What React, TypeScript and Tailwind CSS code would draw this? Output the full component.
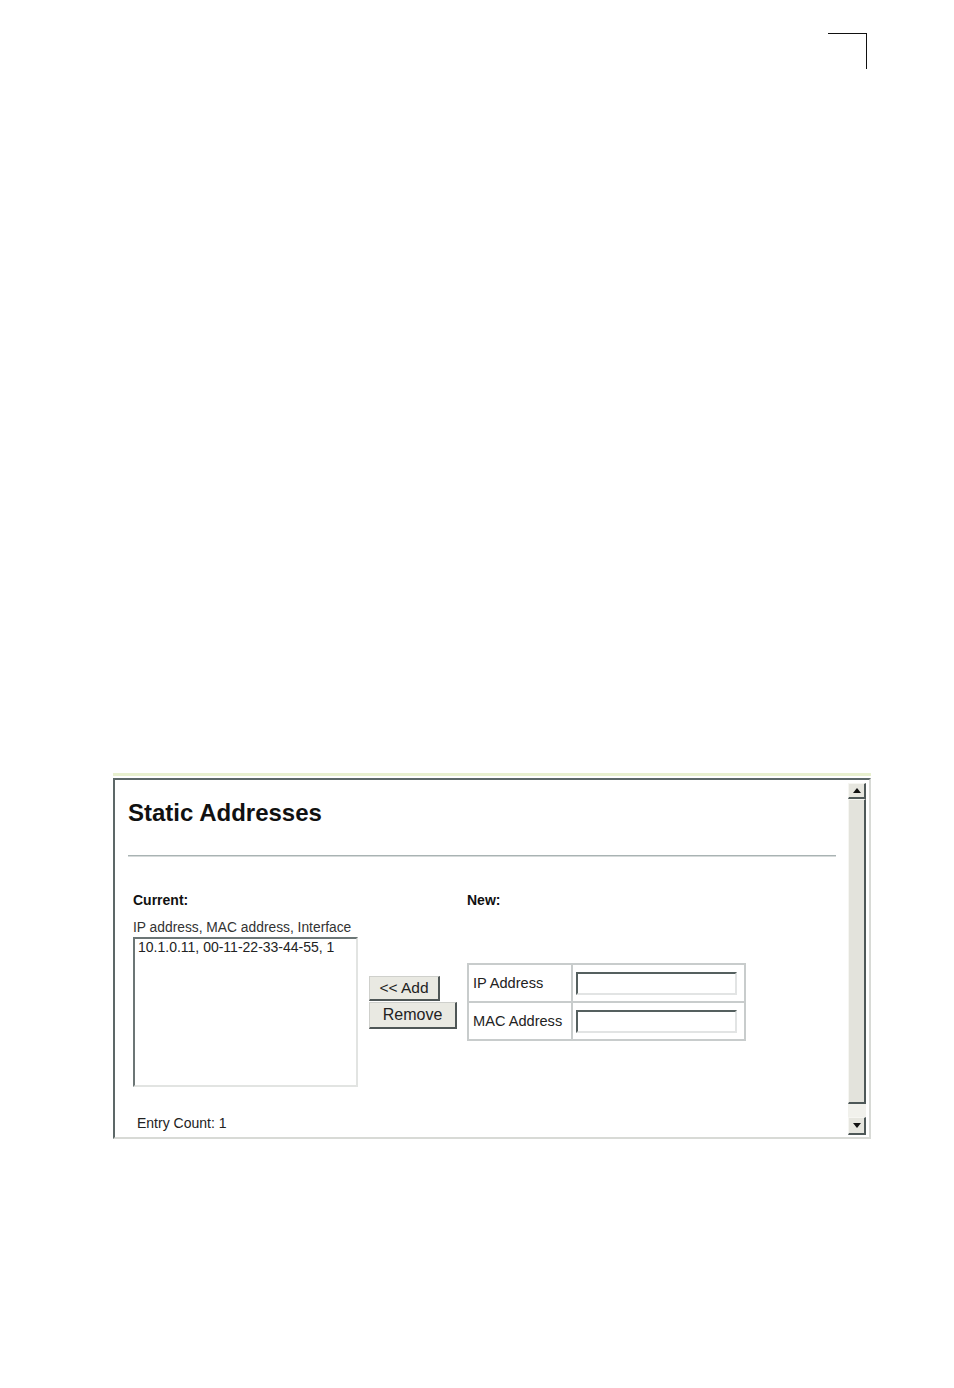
import React from 'react';

const Arrow = ({ down }: { down?: boolean }) => (
    <svg width="8" height="5" viewBox="0 0 8 5" className="block">
        <polygon points={down ? '0,0 8,0 4,5' : '0,5 8,5 4,0'} fill="#111" />
    </svg>
);

const App: React.FC = () => {
    return (
        <div className="w-[954px] h-[1388px] bg-white font-['Liberation_Sans',Arial,sans-serif] text-[#222]">
            {/* crop mark */}
            <div className="flex justify-end pt-[33px] pr-[87px]">
                <div className="w-[39px] h-[36px] border-t-[1.5px] border-r-[1.5px] border-[#111]" />
            </div>

            {/* browser frame */}
            <div className="ml-[113px] mt-[704px] w-[758px] border-t-[3px] border-[#e8f0cf] pt-[2px]">
                <div className="flex h-[361px] overflow-hidden border-2 border-t-[#5d6868] border-l-[#5d6868] border-r-[#d8dad6] border-b-[#d8dad6]">
                    <div className="flex-1 pl-[13px] pr-[12px] pt-[19px]">
                        <h1 className="text-[24px] leading-[27px] font-bold text-[#111]">Static Addresses</h1>
                        <div className="mt-[29px] border-t border-b border-t-[#a9b3b3] border-b-[#d6dada]" />

                        <div className="mt-[35px] ml-[5px] flex items-start">
                            {/* current list */}
                            <div className="w-[225px]">
                                <div className="text-[14px] leading-[16px] font-bold text-[#111]">Current:</div>
                                <div className="mt-[12px] text-[13.8px] leading-[16px] text-[#333] whitespace-nowrap">
                                    IP address, MAC address, Interface
                                </div>
                                <div className="mt-[1px] h-[150px] border-2 border-t-[#6c7676] border-l-[#6c7676] border-r-[#e2e4e2] border-b-[#e2e4e2] pl-[3px]">
                                    <div className="text-[14px] leading-[16px] whitespace-nowrap">10.1.0.11, 00-11-22-33-44-55, 1</div>
                                </div>
                                <div className="mt-[28px] ml-[4px] text-[14px] leading-[16px]">Entry Count: 1</div>
                            </div>

                            {/* buttons */}
                            <div className="ml-[11px] mt-[84px] flex flex-col items-start gap-[1px]">
                                <button className="w-[71px] h-[25px] bg-[#e9e9e2] border-t border-l border-t-[#cfd0cc] border-l-[#cfd0cc] border-r-2 border-b-2 border-r-[#4e5656] border-b-[#4e5656] text-[15.5px] leading-[18px] text-[#222]">
                                    &lt;&lt; Add
                                </button>
                                <button className="w-[88px] h-[27px] bg-[#e9e9e2] border-t border-l border-t-[#cfd0cc] border-l-[#cfd0cc] border-r-2 border-b-2 border-r-[#4e5656] border-b-[#4e5656] text-[16px] leading-[18px] text-[#222]">
                                    Remove
                                </button>
                            </div>

                            {/* new entry */}
                            <div className="ml-[10px]">
                                <div className="text-[14px] leading-[16px] font-bold text-[#111]">New:</div>
                                <div className="mt-[55px] w-[279px] border-2 border-[#c8cccc] grid grid-cols-[102px_1fr] text-[14.6px] leading-[17px]">
                                    <div className="h-[36px] flex items-center pl-[4px]">IP Address</div>
                                    <div className="h-[36px] flex items-center pl-[3px] border-l-2 border-[#c8cccc]">
                                        <input className="w-[161px] h-[23px] bg-white border-2 border-t-[#55605f] border-l-[#55605f] border-r-[#e2e4e4] border-b-[#e2e4e4] outline-none" />
                                    </div>
                                    <div className="h-[38px] flex items-center pl-[4px] border-t-2 border-[#c8cccc]">MAC Address</div>
                                    <div className="h-[38px] flex items-center pl-[3px] border-t-2 border-l-2 border-[#c8cccc]">
                                        <input className="w-[161px] h-[23px] bg-white border-2 border-t-[#55605f] border-l-[#55605f] border-r-[#e2e4e4] border-b-[#e2e4e4] outline-none" />
                                    </div>
                                </div>
                            </div>
                        </div>
                    </div>

                    {/* scrollbar */}
                    <div className="w-[18px] mr-[3px] pt-[3px] flex flex-col">
                        <div className="h-[16px] flex items-center justify-center bg-[#e6e6df] border-t border-l border-t-[#f6f6f2] border-l-[#f6f6f2] border-r-2 border-b-2 border-r-[#4e5858] border-b-[#4e5858]">
                            <Arrow />
                        </div>
                        <div className="h-[305px] bg-[#e3e3dc] border-t border-l border-t-[#f6f6f2] border-l-[#f6f6f2] border-r-2 border-b-2 border-r-[#4e5858] border-b-[#4e5858]" />
                        <div className="h-[13px] bg-[#f1f1ec]" />
                        <div className="h-[18px] flex items-center justify-center bg-[#e6e6df] border-t border-l border-t-[#f6f6f2] border-l-[#f6f6f2] border-r-2 border-b-2 border-r-[#4e5858] border-b-[#4e5858]">
                            <Arrow down />
                        </div>
                    </div>
                </div>
            </div>
        </div>
    );
};

export default App;
